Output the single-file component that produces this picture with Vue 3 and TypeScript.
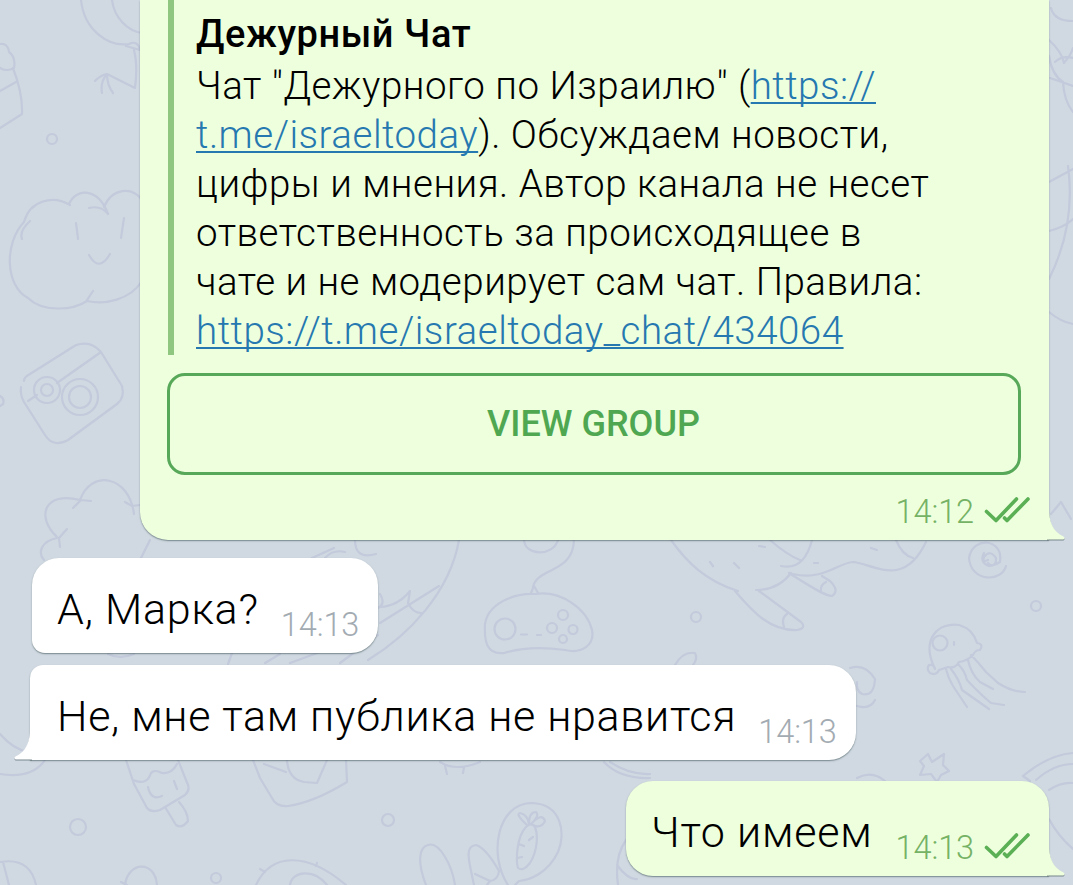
<template>
  <div class="chat">
    <svg class="wallpaper" viewBox="0 0 1073 885" aria-hidden="true">
      <path v-for="(d, i) in doodles" :key="i" :d="d" />
      <circle v-for="(c, i) in dots" :key="'c' + i" :cx="c[0]" :cy="c[1]" :r="c[2]" />
    </svg>

    <div class="bubble out first">
      <div class="preview">
        <h3 class="preview-title">Дежурный Чат</h3>
        <p class="line">Чат "Дежурного по Израилю" (<a>https://</a></p>
        <p class="line"><a>t.me/israeltoday</a>). Обсуждаем новости,</p>
        <p class="line">цифры и мнения. Автор канала не несет</p>
        <p class="line">ответственность за происходящее в</p>
        <p class="line">чате и не модерирует сам чат. Правила:</p>
        <p class="line"><a>https://t.me/israeltoday_chat/434064</a></p>
      </div>
      <button class="view-group">VIEW GROUP</button>
      <div class="meta">
        <span class="time">14:12</span>
        <svg class="checks" viewBox="0 0 46 26"><path :d="checkPath" /></svg>
      </div>
      <svg class="tail" viewBox="0 0 18 40"><path :d="tailPath" /></svg>
    </div>

    <div class="bubble in second">
      <span class="text">А, Марка?</span>
      <span class="time">14:13</span>
    </div>

    <div class="bubble in third">
      <span class="text">Не, мне там публика не нравится</span>
      <span class="time">14:13</span>
      <svg class="tail" viewBox="0 0 18 40"><path :d="tailPath" /></svg>
    </div>

    <div class="bubble out fourth">
      <span class="text">Что имеем</span>
      <span class="time">14:13</span>
      <svg class="checks" viewBox="0 0 46 26"><path :d="checkPath" /></svg>
      <svg class="tail" viewBox="0 0 18 40"><path :d="tailPath" /></svg>
    </div>
  </div>
</template>

<script setup lang="ts">
const checkPath = "M2.5 14.5 L12 23.5 L32.5 2 M20.5 21 L23 23.5 L44 2";
const tailPath = "M0 0 H2 V8 C2 22 6 32 16.5 36.5 Q18.5 38 16.5 39.5 H0 Z";

const doodles: string[] = [
  // balloon and bird
  "M81 0 C84 30 108 47 129 44 Q137 40 140 49 M112 0 C114 18 128 31 142 33 M126 46 L140 50 M134 50 Q138 65 135 88 L107 74 M95 81 Q101 75 107 74 Q100 82 102 93 M107 74 Q107 85 113 93",
  // cupcake
  "M0 44 Q8 43 9 52 Q16 57 14 68 Q7 72 0 68 M13 68 Q23 94 22 114 L0 128 M0 91 L16 82",
  // cloud
  "M70 205 C53 195 30 200 24 222 C4 243 5 286 28 298 C42 312 72 311 87 301 C105 305 130 300 142 281 M22 239 Q19 231 30 221 M69 204 C76 188 98 187 108 214 M89 208 Q101 205 108 214 M104 207 C112 188 132 186 142 200 M76 223 L78 239 M124 218 L121 238 M89 255 Q99 273 110 254 M87 300 L93 291",
  // camera
  "M24 381 Q24 377 30 374 L76 345 Q91 340 101 352 L122 386 Q125 398 117 404 L68 440 Q53 448 45 435 L24 402 Q20 395 21 387 M28 401 L37 395 M57 383 L101 352",
  "M0 396 Q5 399 3 404 L0 406",
  // tree
  "M57 537 C35 516 45 491 80 500 C91 469 129 475 134 514 M73 508 L81 500 L91 501 M125 502 L132 506 L140 505 M60 547 L59 538 L67 529 M57 538 C42 541 37 552 44 560 M150 540 L140 560",
  // balloon with sleeping face
  "M459 540 C450 592 409 635 368 660 M380 607 Q398 606 410 591 L408 603 Q413 613 421 613 M380 623 L439 586 M312 558 L334 548 M325 558 Q333 549 345 552 M355 540 Q355 560 376 554 M380 594 Q386 604 378 608",
  "M228 664 L232 653 M265 663 L280 654 M290 663 L320 652 M340 663 L378 635 M108 654 Q120 660 134 654",
  // gamepad
  "M524 540 C525 556 553 557 558 540 M574 540 C573 574 537 567 533 587 M531 593 L534 586 L538 593 M504 653 C487 655 484 642 485 624 C488 604 513 593 535 594 C561 590 587 609 592 630 C595 645 582 654 565 650 C544 647 523 647 504 653 M521 634.5 H527 M537 635 H541",
  // unicorn
  "M671 540 C686 561 705 581 738 591 M710 562 L713 566 M734 563 L739 568 M735 591 C753 612 770 631 797 630 Q807 628 801 622 L759 591 M787 614 Q781 618 784 627 M756 590 C774 590 785 581 791 573 M770 540 Q787 555 800 560 M812 540 Q804 571 781 566 M789 573 C805 583 824 596 832 596 Q840 591 830 581 L822 576 M826 582 Q820 585 821 592 M793 574 C825 581 838 562 854 562 C875 565 904 588 926 542 M896 540 Q902 555 913 558 M871 548 L877 550 M759 546 L765 547 M814 563 L818 563",
  // swirls
  "M988 560 Q982 563 984 557 Q990 549 996 558 Q997 566 989 566 Q979 562 984 553 M969 558 C973 535 1004 539 1000 562 Q991 568 988 563 M969 558 C971 583 1002 582 1006 566",
  "M850 668 Q865 663 875 679 Q874 697 862 694 Q856 691 857 682 M857 706 Q870 710 875 700",
  // jellyfish
  "M935 669 C920 638 939 622 959 625 Q973 629 977 643 Q984 644 980 650 Q975 650 973 655 Q967 661 959 662 Q955 669 948 667 L939 670 Q936 676 930 673 Q926 669 929 665 Q934 664 935 669 M971 655 Q978 662 986 672 L998 683 Q1012 692 1025 692 M958 664 Q965 671 967 680 Q980 694 991 703 L1004 705 M946 669 Q948 678 953 686 L967 707 M951 669 Q959 679 962 690 L989 709 M968 660 Q971 674 980 682 L993 689 M954 642 V645",
  // stars, rainbow and planets
  "M928 754 L932 762 L944 754 L943 765 L949 771 L941 775 L937 782 L931 774 L920 775 L924 766 L920 761 Z M1023 776 Q1048 755 1073 753 M1036 780 Q1054 764 1073 764 M1049 790 Q1061 782 1073 783 M1049 819 Q1058 836 1073 849 M1023 776 L1030 781 M857 778 Q872 770 885 781",
  "M675 665 Q683 651 695 653 Q698 659 693 665",
  // ice cream
  "M126 760 L134 784 L147 808 Q151 813 160 810 L185 795 Q190 790 188 785 L178 760 M133 780 Q147 786 151 773 Q154 769 162 773 Q172 774 177 764 M148 787 Q151 801 162 796 M174 781 L177 789 M165 807 L176 825 Q182 829 188 821 Q188 812 179 802",
  // gift
  "M253 760 L260 778 L272 798 Q276 807 288 806 C310 803 329 793 347 782 L346 760 M264 764 L286 772 M287 760 Q288 779 304 782 L317 783 L327 760",
  "M0 734 Q13 749 28 752 M0 774 Q32 779 45 760 M0 862 Q30 857 36 885 M3 862 L9 885",
  // face and helmet
  "M125 885 C128 861 155 860 157 885 M121 882 L127 885 M256 885 C271 853 306 851 346 885 M290 885 C292 871 314 868 327 885 M260 869 L265 872 M317 863 L316 866",
  // carrot balloon
  "M508 885 C488 855 497 803 532 803 C562 804 566 834 558 852 C548 873 530 880 519 881 L515 885 M526 827 C516 837 516 862 518 868 Q523 872 530 863 C538 850 538 834 535 827 Q531 822 526 827 M527 825 Q515 814 520 813 Q528 815 529 824 Q529 812 536 812 Q540 816 531 824 Q542 812 545 821 Q541 829 533 825 M519 844 L524 846 M533 837 L529 840 M517 858 L522 857",
  // bunny ears
  "M426 885 C417 862 419 847 428 845 C439 841 452 865 455 885 M474 885 C469 861 464 846 476 845 Q486 848 499 871 Q498 880 490 881 L475 874 M490 881 L487 885",
  "M440 762 Q456 772 480 762 M445 766 L447 774 M464 767 L463 773 M604 762 Q620 779 650 778 M610 762 Q630 775 650 774 M626 840 Q614 857 618 885 M617 865 Q628 880 637 879",
  // right margin
  "M1049 40 Q1062 52 1064 63 Q1071 55 1073 48 M1049 56 Q1052 75 1063 82 Q1064 101 1073 112 M1050 78 L1073 86 M1055 62 Q1062 55 1073 58 M1049 182 L1073 169 M1049 231 Q1065 227 1073 219 M1068 166 Q1076 225 1049 279 M1049 312 Q1061 322 1073 324 M1051 8 Q1054 21 1073 21 M1051 514 L1061 502 L1071 519",
];

const dots: number[][] = [
  [52, 139, 5],
  [47, 390, 13],
  [47, 390, 6],
  [80, 397, 18],
  [80, 397, 11],
  [505, 629, 10.5],
  [563, 615, 5],
  [552, 628, 5],
  [573, 629.5, 4.5],
  [563, 639, 4],
  [696, 617, 5],
  [1036, 606, 5],
  [940, 643, 7.5],
  [78, 827, 8],
  [216, 878, 5],
  [388, 820, 6],
];
</script>

<style>
body {
  margin: 0;
}
</style>

<style scoped>
.chat {
  position: relative;
  width: 1073px;
  height: 885px;
  overflow: hidden;
  display: flex;
  flex-direction: column;
  align-items: flex-start;
  background: #d0d9e1;
  font-family: Roboto, "Noto Sans", sans-serif;
  font-weight: 300;
  color: #000;
}

.wallpaper {
  position: absolute;
  inset: 0;
  width: 1073px;
  height: 885px;
  fill: none;
  stroke: #c3cadb;
  stroke-width: 2.2;
  stroke-linecap: round;
  stroke-linejoin: round;
}

.bubble {
  position: relative;
  box-sizing: border-box;
  display: flex;
  background: #fff;
  box-shadow: 0 1px 1.5px rgba(70, 90, 95, 0.65);
  white-space: nowrap;
}

.bubble.out {
  background: #eeffde;
}

.first {
  flex-direction: column;
  width: 909px;
  height: 540px;
  margin-left: 140px;
  padding: 0 28px 0 27px;
  border-radius: 0 0 0 28px;
}

.preview {
  box-sizing: border-box;
  height: 355px;
  margin-left: 1px;
  padding: 8px 0 0 22px;
  border-left: 6px solid #8fc781;
}

.preview-title {
  margin: 0;
  font-size: 38px;
  font-weight: 500;
  line-height: 53px;
  letter-spacing: 0.55px;
}

.line {
  margin: 0;
  font-size: 38.5px;
  line-height: 49px;
  letter-spacing: 0.5px;
}

.line a {
  color: #2678b0;
  text-decoration: underline;
  text-decoration-thickness: 2px;
  text-underline-offset: 3px;
  text-decoration-skip-ink: none;
}

.view-group {
  width: 854px;
  height: 102px;
  margin: 18px 0 0 -0.5px;
  padding: 0;
  border: 3px solid #58a85a;
  border-radius: 18px;
  background: none;
  color: #4fa851;
  font-family: inherit;
  font-size: 36px;
  font-weight: 500;
}

.meta {
  display: flex;
  justify-content: flex-end;
  margin: 17px -9px 0 0;
}

.time {
  color: #a3abb2;
  font-size: 32.5px;
  line-height: 40px;
  letter-spacing: -0.1px;
}

.out .time {
  color: #75b265;
}

.checks {
  width: 46px;
  height: 26px;
  margin: 5px 0 0 10px;
  fill: none;
  stroke: #5baf55;
  stroke-width: 3.6;
  stroke-linecap: round;
  stroke-linejoin: round;
}

.text {
  font-size: 43px;
  line-height: 50px;
  letter-spacing: 0.8px;
}

.third .text {
  letter-spacing: 0.69px;
}

.second {
  width: 346px;
  height: 95px;
  margin: 18px 0 0 32px;
  padding: 26px 0 0 25px;
  border-radius: 27px 27px 27px 13px;
}

.third {
  width: 826px;
  height: 95px;
  margin: 12px 0 0 30px;
  padding: 26px 0 0 27px;
  border-radius: 13px 27px 27px 0;
}

.fourth {
  width: 423px;
  height: 95px;
  margin: 21px 0 0 626px;
  padding: 26px 0 0 25px;
  border-radius: 27px 27px 0 27px;
}

.in .time,
.fourth .time {
  margin: 21px 0 0 22px;
}

.fourth .time {
  margin-left: 23px;
}

.fourth .checks {
  margin-top: 26px;
}

/* hooks that point out of the last bubble of a group */
.tail {
  position: absolute;
  right: -16px;
  bottom: 0;
  width: 18px;
  height: 40px;
  fill: #eeffde;
  filter: drop-shadow(0 1px 0.7px rgba(70, 90, 95, 0.65));
}

.in .tail {
  right: auto;
  left: -16px;
  fill: #fff;
  transform: scaleX(-1);
}
</style>
